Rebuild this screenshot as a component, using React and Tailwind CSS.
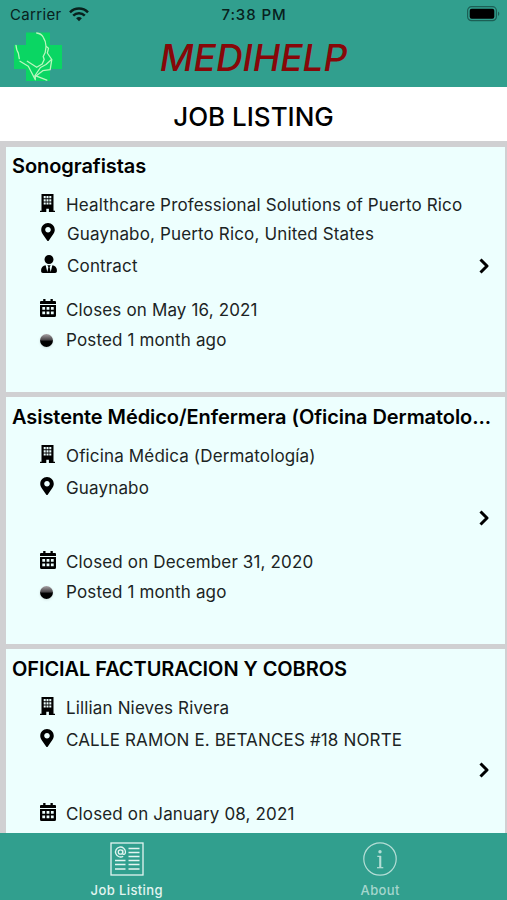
import React, { useState } from 'react';
import { FaMapMarkerAlt, FaUserTie } from 'react-icons/fa';

const jobs = [
  {
    title: 'Sonografistas',
    company: 'Healthcare Professional Solutions of Puerto Rico',
    location: 'Guaynabo, Puerto Rico, United States',
    type: 'Contract',
    date: 'Closes on May 16, 2021',
    posted: 'Posted 1 month ago',
  },
  {
    title: 'Asistente Médico/Enfermera (Oficina Dermatolo...',
    company: 'Oficina Médica (Dermatología)',
    location: 'Guaynabo',
    date: 'Closed on December 31, 2020',
    posted: 'Posted 1 month ago',
  },
  {
    title: 'OFICIAL FACTURACION Y COBROS',
    company: 'Lillian Nieves Rivera',
    location: 'CALLE RAMON E. BETANCES #18 NORTE',
    date: 'Closed on January 08, 2021',
  },
];

const BuildingIcon = () => (
  <svg viewBox="0 0 15 18" className="w-[15px] h-[18px] mb-[5px]">
    <path
      fill="#000"
      fillRule="evenodd"
      d="M1.500 0h12v16.800H15V18H8.900v-3.200H6.300V18H0v-1.200h1.500zM3.700 2v2.200h2V2zm2.800 0v2.200h2V2zm2.800 0v2.200h2V2zM3.700 5.200v2.200h2V5.200zm2.800 0v2.200h2V5.200zm2.800 0v2.200h2V5.200zM3.700 8.400v2.200h2V8.400zm2.800 0v2.200h2V8.400zm2.800 0v2.200h2V8.400z"
    />
  </svg>
);

const CalendarIcon = () => (
  <svg viewBox="0 0 16 18" className="w-4 h-[18px] mb-[5px]">
    <path fill="#000" d="M3.200 0h2.300v2h5V0h2.300v2H15a1 1 0 0 1 1 1v2H0V3a1 1 0 0 1 1-1h2.200z" />
    <path
      fill="#000"
      fillRule="evenodd"
      d="M0 6h16v10.500a1.500 1.500 0 0 1-1.500 1.500h-13A1.500 1.500 0 0 1 0 16.500zM2.300 8v2.800h2.800V8zm4.300 0v2.800h2.800V8zm4.300 0v2.800h2.800V8zM2.300 12.500v2.800h2.800v-2.800zm4.300 0v2.800h2.800v-2.800zm4.300 0v2.800h2.800v-2.800z"
    />
  </svg>
);

const ChevronIcon = () => (
  <svg viewBox="0 0 10 16" className="w-[10px] h-4 shrink-0" fill="none" stroke="#000" strokeWidth="3">
    <path d="M1.500 1.500 8 8l-6.500 6.500" strokeLinejoin="round" />
  </svg>
);

const Logo = () => (
  <svg viewBox="0 0 50 52" className="w-[50px] h-[52px]" fill="none">
    <path fill="#0ad663" d="M12 1.500h24v12.500h12v24h-12v12h-24V38H0V14h12z" />
    <g stroke="#b9f7bd" strokeWidth="1.300" strokeLinecap="round" strokeLinejoin="round">
      <path d="M22.700 2c3.500.3 5.300 2 6.600 4.300 2 3 2.700 5.700 2.700 9l2.500 2-1.200 4.700 4.500 6.500-1.600 10.200-7.400 1-7.800 6" />
      <path d="M32 16l-.800 5.500-2 4 1 3-2 4.500-5.500 3.300-9.400-6" />
      <path d="M37.500 28.500l-5.500 5-5.500 3-5.500 8" />
      <path d="M2 14.300c.3 3 .6 5.500 2.300 7.700l1 5.700M6 30.300l8.300 5 7 13.400v-4l11.500 4.500" />
    </g>
  </svg>
);

const WifiIcon = () => (
  <svg viewBox="0 0 20 15" className="w-5 h-[15px] mb-px" fill="none" stroke="#08211d" strokeWidth="2.500">
    <path d="M1 5.300a12.800 12.800 0 0 1 18 0M4.200 8.600a8.200 8.200 0 0 1 11.600 0" />
    <path d="M10 14.300l-2.900-3a4.200 4.200 0 0 1 5.800 0z" fill="#08211d" stroke="none" />
  </svg>
);

const BatteryIcon = () => (
  <svg viewBox="0 0 33 16" className="w-[33px] h-4 mb-[2px]">
    <rect x="0.600" y="0.700" width="28.800" height="14" rx="4" fill="none" stroke="#1c5f55" strokeWidth="1.200" />
    <rect x="2.700" y="2.700" width="24.600" height="10" rx="2" fill="#000" />
    <path d="M31 5.500c1.800.8 1.800 3.700 0 4.500z" fill="#1c5f55" />
  </svg>
);

const NewsIcon = () => (
  <svg viewBox="0 0 34 34" className="w-[34px] h-[34px]" fill="none" stroke="#e3f5f1" strokeWidth="1.300">
    <rect x="1" y="1" width="32" height="32" />
    <path d="M18.500 6.500h11M18.500 10.500h11M18.500 14.500h11M5 18.500h10.500M18.500 18.500h11M5 22.500h10.500M18.500 22.500h11M5 27h10.500M18.500 27h11" />
    <circle cx="10.500" cy="10" r="2.200" />
    <path d="M12.700 7.800v3.400c0 2 2.800 1.600 2.800-1.200a5 5 0 1 0-2.300 4.200" />
  </svg>
);

const InfoIcon = () => (
  <svg viewBox="0 0 34 34" className="w-[34px] h-[34px]" fill="none" stroke="#b5ded6" strokeWidth="1.200">
    <circle cx="17" cy="17" r="16.200" />
    <circle cx="17" cy="9.800" r="1.700" fill="#b5ded6" stroke="none" />
    <path d="M14.300 14.300h3v11" strokeWidth="1.300" />
    <path d="M17.300 14v11.500" strokeWidth="2" />
    <path d="M14 25.700h6.300" />
  </svg>
);

const Row = ({ icon, children, className }) => (
  <div className={`flex items-center text-[17px] tracking-[0.15px] text-[#1c2424] whitespace-nowrap ${className}`}>
    <span className="w-[26px] shrink-0 flex items-center">{icon}</span>
    <span className="pt-px">{children}</span>
  </div>
);

const JobCard = ({ job, className }) => (
  <div className={`bg-[#edfffe] shrink-0 overflow-hidden ${className}`}>
    <h2
      className={`h-[39px] pl-[6px] text-[20px] tracking-[-0.07px] font-semibold text-black whitespace-nowrap ${
        job.type ? 'leading-[39px]' : 'leading-[41px]'
      }`}
    >
      {job.title}
    </h2>
    <div className={job.type ? 'pt-1' : 'pt-[5px]'}>
      <Row icon={<BuildingIcon />} className="h-[29px] pl-[34px] pt-px">{job.company}</Row>
      <Row
        icon={<FaMapMarkerAlt className="w-[14px] h-[18px] mb-1 text-black" />}
        className={job.type ? 'h-[30px] pl-[35px]' : 'h-9 pl-[34px]'}
      >
        {job.location}
      </Row>
      <div className={`flex items-center justify-between pr-4 ${job.type ? 'h-[34px]' : 'h-6'}`}>
        {job.type ? (
          <Row icon={<FaUserTie className="w-4 h-[18px] mb-1 text-black" />} className="pl-[35px]">
            {job.type}
          </Row>
        ) : (
          <span />
        )}
        <ChevronIcon />
      </div>
    </div>
    <div className={job.type ? 'pt-3' : 'pt-[17px]'}>
      <Row icon={<CalendarIcon />} className="h-[30px] pl-[34px]">
        {job.date}
      </Row>
      {job.posted && (
        <Row
          icon={<span className="w-[13px] h-[13px] mt-px rounded-full bg-linear-to-b from-[#aaa4a7] via-[#4a4649] via-45% to-black to-60% shadow-sm" />}
          className="h-[30px] pl-[34px]"
        >
          {job.posted}
        </Row>
      )}
    </div>
  </div>
);

const App = () => {
  const [tab, setTab] = useState('jobs');

  return (
    <div className="flex flex-col w-[507px] h-[900px] overflow-hidden bg-white font-[Inter,'Liberation_Sans',sans-serif]">
      {/* Status bar and header */}
      <header className="h-[87px] shrink-0 bg-[#319f8e]">
        <div className="grid grid-cols-3 items-center h-[30px] pl-[10px] pr-[7px] text-[15px] text-[#08211d]">
          <div className="flex items-center gap-[7px] tracking-[0.35px]">
            Carrier <WifiIcon />
          </div>
          <span className="text-center font-medium tracking-[0.9px] pr-[2px]">7:38 PM</span>
          <div className="flex justify-end">
            <BatteryIcon />
          </div>
        </div>
        <div className="grid grid-cols-[64px_1fr_64px] items-center h-[54px]">
          <div className="pl-[14px]">
            <Logo />
          </div>
          <h1 className="text-center text-[37px] leading-[52px] pt-[2px] font-medium italic text-[#870709]">MEDIHELP</h1>
        </div>
      </header>

      <div className="flex items-center justify-center h-[54px] shrink-0 pt-[5px] text-[26px] font-medium text-black">
        JOB LISTING
      </div>

      {/* Job list */}
      <main className="flex-1 flex flex-col gap-[5px] overflow-hidden bg-[#d0d0d2] pt-[6px] pl-[6px] pr-[2px]">
        <JobCard job={jobs[0]} className="h-[245px]" />
        <JobCard job={jobs[1]} className="h-[247px]" />
        <JobCard job={jobs[2]} className="h-[247px]" />
      </main>

      {/* Bottom tabs */}
      <nav className="grid grid-cols-2 h-[67px] shrink-0 bg-[#319f8e] text-[13px] font-medium">
        <button onClick={() => setTab('jobs')} className="flex flex-col items-center pt-[9px] text-[#e3f5f1]">
          <NewsIcon />
          <span className="mt-[5px] tracking-[0.4px]">Job Listing</span>
        </button>
        <button onClick={() => setTab('about')} className="flex flex-col items-center pt-[9px] text-[#a5d6cd]">
          <InfoIcon />
          <span className="mt-[5px] tracking-[0.4px]">About</span>
        </button>
      </nav>
    </div>
  );
};

export default App;
